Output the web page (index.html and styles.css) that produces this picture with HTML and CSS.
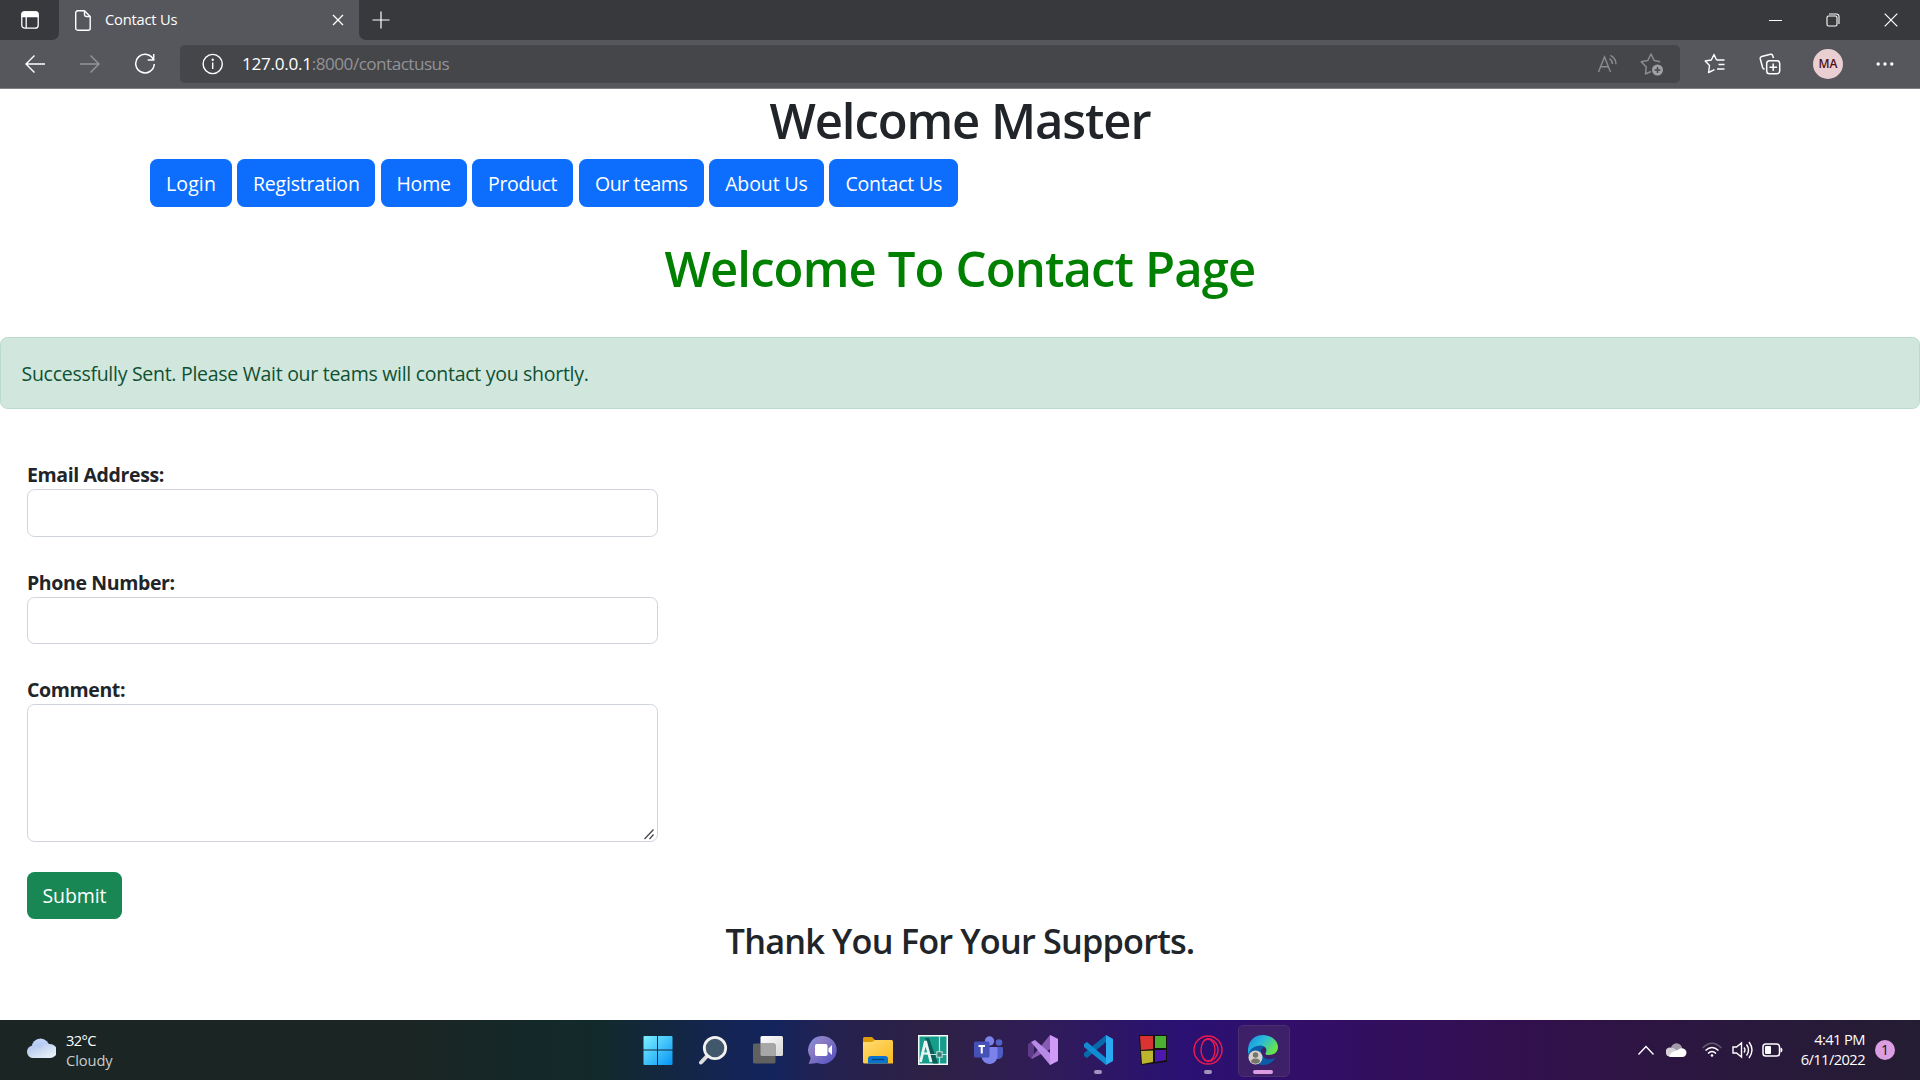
FILE: index.html
```html
<!DOCTYPE html>
<html lang="en">
<head>
<meta charset="utf-8">
<title>Contact Us</title>
<link rel="stylesheet" href="styles.css">
</head>
<body>
<header class="browser">
  <div class="tabbar">
    <div class="tab-actions">
      <svg width="18" height="18" viewBox="0 0 18 18" fill="none" stroke="#fff" stroke-width="1.3"><rect x=".8" y=".8" width="16.4" height="16.4" rx="3"/><path d="M5.2 5v12"/><path d="M1 3a2 2 0 0 1 2-2h12a2 2 0 0 1 2 2v2.500H1z" fill="#fff"/></svg>
    </div>
    <div class="tab">
      <svg class="doc" width="16" height="21" viewBox="0 0 16 21" fill="none" stroke="#fff" stroke-width="1.4" stroke-linejoin="round"><path d="M2.700.8H9.500L15.200 6.500V18.200a2 2 0 0 1-2 2H2.700a2 2 0 0 1-2-2V2.800a2 2 0 0 1 2-2z"/><path d="M9.500 1v3.800a1.700 1.700 0 0 0 1.700 1.700H15"/></svg>
      <span class="tab-title">Contact Us</span>
      <svg width="12" height="12" viewBox="0 0 12 12" stroke="#fff" stroke-width="1.300"><path d="M1 1l10 10M11 1L1 11"/></svg>
    </div>
    <div class="newtab"><svg width="18" height="18" viewBox="0 0 18 18" stroke="#fff" stroke-width="1.200"><path d="M9 .5v17M.5 9h17"/></svg></div>
    <div class="window-buttons">
      <svg width="14" height="14" viewBox="0 0 14 14" stroke="#fff"><path d="M1 7.500h13"/></svg>
      <svg width="14" height="14" viewBox="0 0 14 14" fill="none" stroke="#fff" stroke-width="1.100"><rect x="1" y="3" width="10" height="10" rx="1.500"/><path d="M3 1h7.500a2.500 2.500 0 0 1 2.500 2.500V11"/></svg>
      <svg width="14" height="14" viewBox="0 0 14 14" stroke="#fff" stroke-width="1.200"><path d="M.7.7l12.600 12.600M13.300.7L.7 13.300"/></svg>
    </div>
  </div>
  <div class="toolbar">
    <div class="nav-icons">
      <svg width="22" height="20" viewBox="0 0 22 20" fill="none" stroke="#fff" stroke-width="1.400"><path d="M10.500 1.500L2 10l8.500 8.500M2 10h19"/></svg>
      <svg width="22" height="20" viewBox="0 0 22 20" fill="none" stroke="#95969a" stroke-width="1.400"><path d="M11.500 1.500L20 10l-8.500 8.500M20 10H1"/></svg>
      <svg width="22" height="22" viewBox="0 0 22 22" fill="none" stroke="#fff" stroke-width="1.500"><path d="M19.600 7A9.300 9.300 0 1 0 20.300 11M19.700 1v6h-6"/></svg>
    </div>
    <div class="address">
      <svg width="22" height="22" viewBox="0 0 22 22" fill="none" stroke="#fff" stroke-width="1.400"><circle cx="10.700" cy="11" r="9.600"/><path d="M10.700 9.500v6.500"/><circle cx="10.700" cy="6.700" r=".5" fill="#fff"/></svg>
      <span class="url"><span class="host">127.0.0.1</span><span class="path">:8000/contactusus</span></span>
      <svg class="read" width="22" height="20" viewBox="0 0 22 20" fill="none" stroke="#8b8c8f" stroke-width="1.400"><path d="M1.500 18L7.500 3l6 15M3.600 12.800h7.800M12.500 4.500q3 2.300 3 5.500M13.500 1.300q5.500 3 5.500 9"/></svg>
      <svg width="24" height="24" viewBox="0 0 24 24" fill="none" stroke="#8b8c8f" stroke-width="1.500" stroke-linejoin="round"><path d="M11 19.500L5.500 22l.8-7L1.200 9.700l6.600-1.200L11 2l3.200 6.500 6 1.300"/><circle cx="17.500" cy="18" r="5.500" fill="#a0a1a4" stroke="none"/><path d="M17.500 15v6M14.500 18h6" stroke="#48494b"/></svg>
    </div>
    <div class="tools">
      <svg width="22" height="22" viewBox="0 0 22 22" fill="none" stroke="#fff" stroke-width="1.400" stroke-linejoin="round"><path d="M12.600 7H20.500M14.500 11.500h6M13 16h7.500M12.600 7L10 1.500 7.300 7 1.200 8 5.500 12.500 4.600 19.500 10.500 16.600"/></svg>
      <svg width="22" height="22" viewBox="0 0 22 22" fill="none" stroke="#fff" stroke-width="1.500"><rect x="7.700" y="7.700" width="13" height="13" rx="2.800"/><path d="M14.200 10.500v7.500M10.500 14.200H18M14.500 5l-.7-2.200A2 2 0 0 0 11.500 1.300L2.700 3.600A2 2 0 0 0 1.300 6l2.300 8.500q.5 1.500 2 1.700"/></svg>
      <span class="avatar">MA</span>
      <svg width="18" height="6" viewBox="0 0 18 6" fill="#fff"><circle cx="2.200" cy="3" r="1.700"/><circle cx="9" cy="3" r="1.700"/><circle cx="15.800" cy="3" r="1.700"/></svg>
    </div>
  </div>
</header>

<main class="page">
  <h1 class="title">Welcome Master</h1>
  <nav class="menu">
    <a class="btn login">Login</a>
    <a class="btn registration">Registration</a>
    <a class="btn home">Home</a>
    <a class="btn product">Product</a>
    <a class="btn teams">Our teams</a>
    <a class="btn about">About Us</a>
    <a class="btn contact">Contact Us</a>
  </nav>
  <h1 class="title subtitle">Welcome To Contact Page</h1>
  <div class="alert">Successfully Sent. Please Wait our teams will contact you shortly.</div>
  <form class="form">
    <label for="email">Email Address:</label>
    <input class="field" id="email" type="text">
    <label for="phone">Phone Number:</label>
    <input class="field phone-field" id="phone" type="text">
    <label for="comment">Comment:</label>
    <div class="comment-box">
      <textarea class="field comment" id="comment"></textarea>
      <svg class="grip" width="12" height="12" viewBox="0 0 12 12" stroke="#45484c" stroke-width="1.300"><path d="M1.500 11l9-9.500M6.500 11l4-4.500"/></svg>
    </div>
    <button class="submit" type="button">Submit</button>
  </form>
  <h2 class="thanks">Thank You For Your Supports.</h2>
</main>

<footer class="taskbar">
  <div class="weather">
    <svg width="30" height="20" viewBox="0 0 30 20"><defs><linearGradient id="cl" x2="1" y2="1"><stop stop-color="#a9c0eb"/><stop offset="1" stop-color="#f2f7fb"/></linearGradient><linearGradient id="ct" x2="0" y2="1"><stop stop-color="#c3d5fb"/><stop offset="1" stop-color="#a4bae6"/></linearGradient></defs><circle cx="14.500" cy="9.500" r="9" fill="url(#ct)"/><path d="M6.500 7.500Q11 7 14 11q4-6 10-5a7 7 0 0 1 0 14H6.500a6.300 6.300 0 0 1 0-12.500z" fill="url(#cl)"/></svg>
    <div class="weather-text"><span class="temp">32°C</span><span class="sky">Cloudy</span></div>
  </div>
  <div class="apps">
    <div class="app"><svg width="30" height="30" viewBox="0 0 30 30"><defs><linearGradient id="wn" x2="1" y2="1"><stop stop-color="#7df0ff"/><stop offset="1" stop-color="#0795f5"/></linearGradient></defs><path d="M.5 2a1 1 0 0 1 1-1H14v13.500H.5zM15 1h13.500a1 1 0 0 1 1 1v12.500H15zM.5 15.500H14V30H1.500a1 1 0 0 1-1-1zM15 15.500h14.500V29a1 1 0 0 1-1 1H15z" fill="url(#wn)"/></svg></div>
    <div class="app"><svg width="30" height="30" viewBox="0 0 30 30"><path d="M10.500 19.500L3 27.500" stroke="#dedede" stroke-width="4" stroke-linecap="round"/><circle cx="17" cy="13" r="10.700" fill="#41576b" stroke="#f1f1f1" stroke-width="2.800"/></svg></div>
    <div class="app"><svg width="30" height="30" viewBox="0 0 30 30"><defs><linearGradient id="tv" x2="1" y2="1"><stop stop-color="#fff"/><stop offset="1" stop-color="#d5d5d5"/></linearGradient></defs><rect x="7.500" y="1" width="22.500" height="20" rx="1.500" fill="url(#tv)"/><rect y="8.500" width="22.500" height="20" rx="1.500" fill="#606060"/><path d="M7.500 8.500H21a1.500 1.500 0 0 1 1.500 1.500v11H9a1.500 1.500 0 0 1-1.500-1.500z" fill="#a7a7a7"/></svg></div>
    <div class="app"><svg width="30" height="30" viewBox="0 0 30 30"><defs><linearGradient id="ch" x2="1" y2="1"><stop stop-color="#7e91e3"/><stop offset=".35" stop-color="#8b7bc2"/><stop offset="1" stop-color="#4e4fc5"/></linearGradient></defs><path d="M15 1a14 14 0 1 1-5.500 27L.7 29l2-6A14 14 0 0 1 15 1z" fill="url(#ch)"/><rect x="7" y="9" width="12.500" height="12" rx="1.800" fill="#fff"/><path d="M20.500 13.500l3.500-3.500v10l-3.500-3.500z" fill="#fff"/></svg></div>
    <div class="app"><svg width="30" height="30" viewBox="0 0 30 30"><defs><linearGradient id="fo" x2="1" y2="1"><stop stop-color="#ffdc74"/><stop offset="1" stop-color="#fbb91c"/></linearGradient></defs><path d="M0 3.500A1.500 1.500 0 0 1 1.500 2H9l3.500 3.500V12H0z" fill="#dd9b0a"/><path d="M0 7h9l3-2h16.500A1.500 1.500 0 0 1 30 6.500V28.500H1.500A1.500 1.500 0 0 1 0 27z" fill="url(#fo)"/><path d="M5 28.500V24a3 3 0 0 1 3-3h14a3 3 0 0 1 3 3v4.500z" fill="#0874cd"/><path d="M9 24.500h12" stroke="#043f78" stroke-width="1.200"/></svg></div>
    <div class="app"><svg width="30" height="30" viewBox="0 0 30 30"><rect width="30" height="30" fill="#f4faf9"/><rect x="1.500" y="1.500" width="27" height="27" fill="#169c8a"/><path d="M7 3h4l9 25.500h-5z" fill="#0b5d59"/><path d="M2.500 27L7.500 6l5.500 21" fill="none" stroke="#eaf5f3" stroke-width="2.800"/><path d="M3 18.500h8" stroke="#eaf5f3" stroke-width="2.200"/><path d="M21.500 1v15.500M21.500 22.500V29M12 19.500h6.500M24.500 19.500H29" stroke="#c9e2df" stroke-width="1.200"/><rect x="18.800" y="16.800" width="5.400" height="5.400" fill="#377f7b" stroke="#c9e2df"/></svg></div>
    <div class="app"><svg width="30" height="30" viewBox="0 0 30 30"><circle cx="26" cy="7.500" r="3.300" fill="#5361ca"/><path d="M22 12h7a1 1 0 0 1 1 1v6a5 5 0 0 1-8 4z" fill="#4f5bc7"/><circle cx="16.500" cy="6" r="4.700" fill="#7b83eb"/><path d="M9 12h14.500a1 1 0 0 1 1 1v7a8 8 0 0 1-16 2z" fill="#7b83eb"/><rect x="1" y="6.500" width="15.500" height="16" rx="1.500" fill="#4651b7"/><path d="M5.500 11h6.500M8.750 11v7.500" stroke="#fff" stroke-width="2"/></svg></div>
    <div class="app"><svg width="30" height="30" viewBox="0 0 30 30"><path d="M0 9l3-2 3 3v10l-3 3-3-2z" fill="#5d3b88"/><path d="M3 23L22 0l8 4v6L4 24z" fill="#865bb1"/><path d="M3 7l4-2 23 20-8 5z" fill="#b78be6"/><path d="M22 0l8 4v22l-8 4z" fill="#d09bf8"/></svg></div>
    <div class="app"><svg width="30" height="30" viewBox="0 0 30 30"><path d="M1 21l3 2L23 7V0L1 18z" fill="#0969ac"/><path d="M1 9l3-2 19 16v7L1 12z" fill="#118bd1"/><path d="M23 0l7 4v22l-7 4z" fill="#2aabf1"/></svg><i class="mark"></i></div>
    <div class="app"><svg width="30" height="30" viewBox="0 0 30 30"><path d="M1 0h28v27L3 30z" fill="#111"/><path d="M2 1h13v13L3 15z" fill="#d93431"/><path d="M17 1h11v12H17z" fill="#4caf31"/><path d="M3 16l12-.5V27L4 29z" fill="#bdb52f"/><path d="M17 15h11v10l-11 2z" fill="#4d18ad"/></svg></div>
    <div class="app"><svg width="30" height="30" viewBox="0 0 30 30" fill="none" stroke="#ee1b4e" stroke-width="1.400"><circle cx="15" cy="15" r="14"/><ellipse cx="15" cy="15" rx="7" ry="11"/><path d="M11 5.500Q16 1.500 21 6q4 4 4 9t-4 9q-5 4.500-10 .5"/></svg><i class="mark"></i></div>
    <div class="app active"><svg width="30" height="30" viewBox="0 0 30 30"><defs><linearGradient id="ed" x2="1" y2=".5"><stop stop-color="#168dde"/><stop offset=".5" stop-color="#28b9dc"/><stop offset="1" stop-color="#67e44b"/></linearGradient></defs><path d="M0 14v2A15 15 0 0 0 15 30q8 0 12.500-7Q18 26.500 14 20q-3-5 3-9L10 6Q2 7 0 14z" fill="#0d5ba8"/><path d="M0 14C1 4 8 0 15 0s15 5 15 12c0 6-5 8-9 8s-4-1-3-3c2-4-3-8-9-6-5 1-8 5-9 9z" fill="url(#ed)"/><circle cx="7.500" cy="22.500" r="7" fill="#d4d1ca"/><circle cx="7.500" cy="20" r="2.700" fill="#77736d"/><path d="M3 27q0-3.500 4.500-3.500T12 27q-4.500 3.500-9 0z" fill="#77736d"/></svg><i class="mark"></i></div>
  </div>
  <div class="tray">
    <svg width="18" height="12" viewBox="0 0 18 12" fill="none" stroke="#fff" stroke-width="1.400"><path d="M1.500 10.500L9 2.500l7.500 8"/></svg>
    <svg class="onedrive" width="21" height="14" viewBox="0 0 21 14"><circle cx="10.500" cy="6" r="5.700" fill="#a19ba9"/><path d="M4 4.500q4 0 7 3L4 13.500a4.500 4.500 0 0 1 0-9z" fill="#d4d1d7"/><path d="M3 13q2-4 6-5 3-1 5-2.500 5-1 6.500 3.500 0 5-4.500 5H4z" fill="#fff"/></svg>
    <svg class="wifi" width="20" height="16" viewBox="0 0 20 16" fill="none" stroke="#fff" stroke-width="1.500"><path d="M.7 6Q10-3.500 19.300 6" stroke="#675d70"/><path d="M3.500 8.500q6.500-6 13 0M6 11.500q4-4 8 0"/><circle cx="10" cy="13.500" r="1.300" fill="#fff" stroke="none"/></svg>
    <svg class="volume" width="21" height="18" viewBox="0 0 21 18" fill="none" stroke="#fff" stroke-width="1.400"><path d="M1 6h3.500L9.500 2v14l-5-4H1zM12 6.500q2 2.500 0 5M14.500 3.500q4 5.500 0 11M17 1q6 8 0 16"/></svg>
    <svg class="battery" width="21" height="14" viewBox="0 0 21 14"><rect x="1" y="1" width="16.500" height="12" rx="2.800" fill="none" stroke="#fff" stroke-width="1.500"/><rect x="3" y="3" width="6" height="8" rx="1" fill="#fff"/><path d="M18.500 4.500q2 .3 2 2.500t-2 2.500z" fill="#fff"/></svg>
    <div class="clock"><span>4:41 PM</span><span>6/11/2022</span></div>
    <span class="badge">1</span>
  </div>
</footer>
</body>
</html>
```
FILE: styles.css
```css
* { box-sizing: border-box; }
html, body { margin: 0; height: 1080px; overflow: hidden; }
body {
  display: flex;
  flex-direction: column;
  background: #fff;
  color: #212529;
  font: 19.5px/30px "Open Sans", "Noto Sans", sans-serif;
}
svg { display: block; flex: none; }

/* Browser chrome */
.browser { height: 89px; background: #56575c; border-bottom: 1px solid #808186; color: #fff; }
.tabbar { display: flex; height: 40px; background: #56575c; }
.tab-actions { width: 59px; padding: 11px 0 0 21px; background: #38393c; border-bottom-right-radius: 7px; }
.tab { display: flex; align-items: center; width: 300px; padding: 0 15px 0 16px; }
.tab .doc { margin-right: 14px; }
.tab-title { flex: 1; font-size: 14.7px; letter-spacing: -.2px; line-height: 38px; height: 40px; }
.newtab { padding: 11px 0 0 13px; flex: 1; background: #38393c; border-bottom-left-radius: 7px; }
.window-buttons { display: flex; align-items: center; gap: 44px; padding-right: 22px; background: #38393c; }
.toolbar { display: flex; align-items: center; height: 48px; }
.nav-icons { display: flex; align-items: center; gap: 33px; width: 180px; padding-left: 24px; }
.address { display: flex; align-items: center; width: 1500px; height: 38px; padding: 0 16px 0 22px; background: #454649; border-radius: 5px; }
.url { flex: 1; padding-left: 18px; font-size: 17.2px; }
.host { letter-spacing: -.3px; }
.path { color: #929396; letter-spacing: -.55px; }
.read { margin-right: 21px; }
.tools { display: flex; align-items: center; flex: 1; padding: 0 0 0 24px; }
.tools svg:nth-child(2) { margin-left: 33px; }
.avatar { width: 30px; height: 30px; margin: 0 33px 0 32px; border-radius: 50%; background: #e9cfd2; color: #501117; font-size: 12px; font-weight: 600; text-align: center; }

/* Page */
.page { flex: none; height: 931px; }
.title { margin: 0; padding-top: 1px; height: 60px; font-size: 49px; line-height: 60px; font-weight: 600; letter-spacing: -1.1px; text-align: center; }
.menu { display: flex; gap: 5.3px; margin-top: 10px; padding-left: 150px; }
.btn { height: 48px; padding-top: 10px; border-radius: 7.5px; background: #0d6efd; color: #fff; text-align: center; }
.login { width: 82px; letter-spacing: .15px; }
.registration { width: 138px; letter-spacing: -.2px; }
.home { width: 86px; letter-spacing: -.2px; }
.product { width: 101.500px; letter-spacing: -.35px; }
.teams { width: 125px; letter-spacing: -.45px; }
.about { width: 115px; letter-spacing: -.1px; }
.contact { width: 129px; letter-spacing: -.2px; }
.subtitle { margin-top: 31px; padding-top: 0; color: green; letter-spacing: -.86px; }
.alert { height: 72px; margin-top: 39px; padding: 21px 20px 19px 20.500px; border: 1px solid #badbcc; border-radius: 7.5px; background: #d1e7dd; color: #0f5132; letter-spacing: -.28px; }
.form { display: flex; flex-direction: column; align-items: flex-start; margin-top: 50px; padding-left: 27px; }
label { height: 30px; padding-top: 1px; font-weight: 700; letter-spacing: -.38px; }
.field { display: block; width: 631px; height: 48px; margin: 0 0 30px; border: 1px solid #ced4da; border-radius: 7.5px; background: #fff; font: inherit; }
.phone-field { height: 47px; }
.comment-box { position: relative; }
.comment { height: 138px; resize: none; }
.grip { position: absolute; right: 3px; bottom: 32px; }
.submit { width: 95px; height: 47px; border: 0; border-radius: 7.5px; background: #198754; color: #fff; font: inherit; letter-spacing: -.1px; padding: 0; }
.thanks { margin: 1px 0 0; font-size: 34.3px; line-height: 42px; font-weight: 600; letter-spacing: -.82px; text-align: center; }

/* Taskbar */
.taskbar {
  display: flex;
  justify-content: space-between;
  height: 60px;
  color: #fff;
  font-size: 14.7px;
  line-height: 20px;
  background: linear-gradient(90deg, #1b2524 0, #1b2523 400px, #122a2c 600px, #142455 730px, #13245c 775px, #252150 830px, #2d2144 930px, #301c57 1040px, #2a1173 1180px, #330e67 1310px, #32104c 1530px, #2b173f 1700px, #241d32 1920px);
}
.weather { display: flex; width: 630px; padding: 9px 0 0 26px; }
.weather svg { margin-top: 9px; }
.weather-text { display: flex; flex-direction: column; padding: 1px 0 0 10px; }
.temp { letter-spacing: -.6px; }
.sky { color: #c9cccb; letter-spacing: -.1px; }
.apps { display: flex; width: 661px; }
.app { position: relative; display: flex; justify-content: center; width: 55.1px; padding-top: 15px; }
.mark { position: absolute; left: 23.500px; top: 50px; width: 8px; height: 4px; border-radius: 2px; background: #a293bd; }
.active::before { content: ""; position: absolute; left: 2px; top: 5px; width: 50px; height: 50px; border: 1px solid #4c2e73; border-radius: 5px; background: #3d2068; }
.active svg { position: relative; }
.active .mark { left: 17.500px; width: 20px; background: #dc9ee3; }
.tray { display: flex; align-items: center; flex: 1; justify-content: flex-end; padding-right: 25px; }
.onedrive { margin-left: 11px; }
.wifi { margin-left: 15px; }
.volume { margin-left: 10px; }
.battery { margin-left: 9px; }
.clock { display: flex; flex-direction: column; align-items: flex-end; width: 82px; letter-spacing: -.58px; padding-bottom: 3px; }
.badge { width: 20px; height: 20px; margin-left: 10px; border-radius: 50%; background: #dc9ee3; color: #111; font-size: 14px; text-align: center; }
```
